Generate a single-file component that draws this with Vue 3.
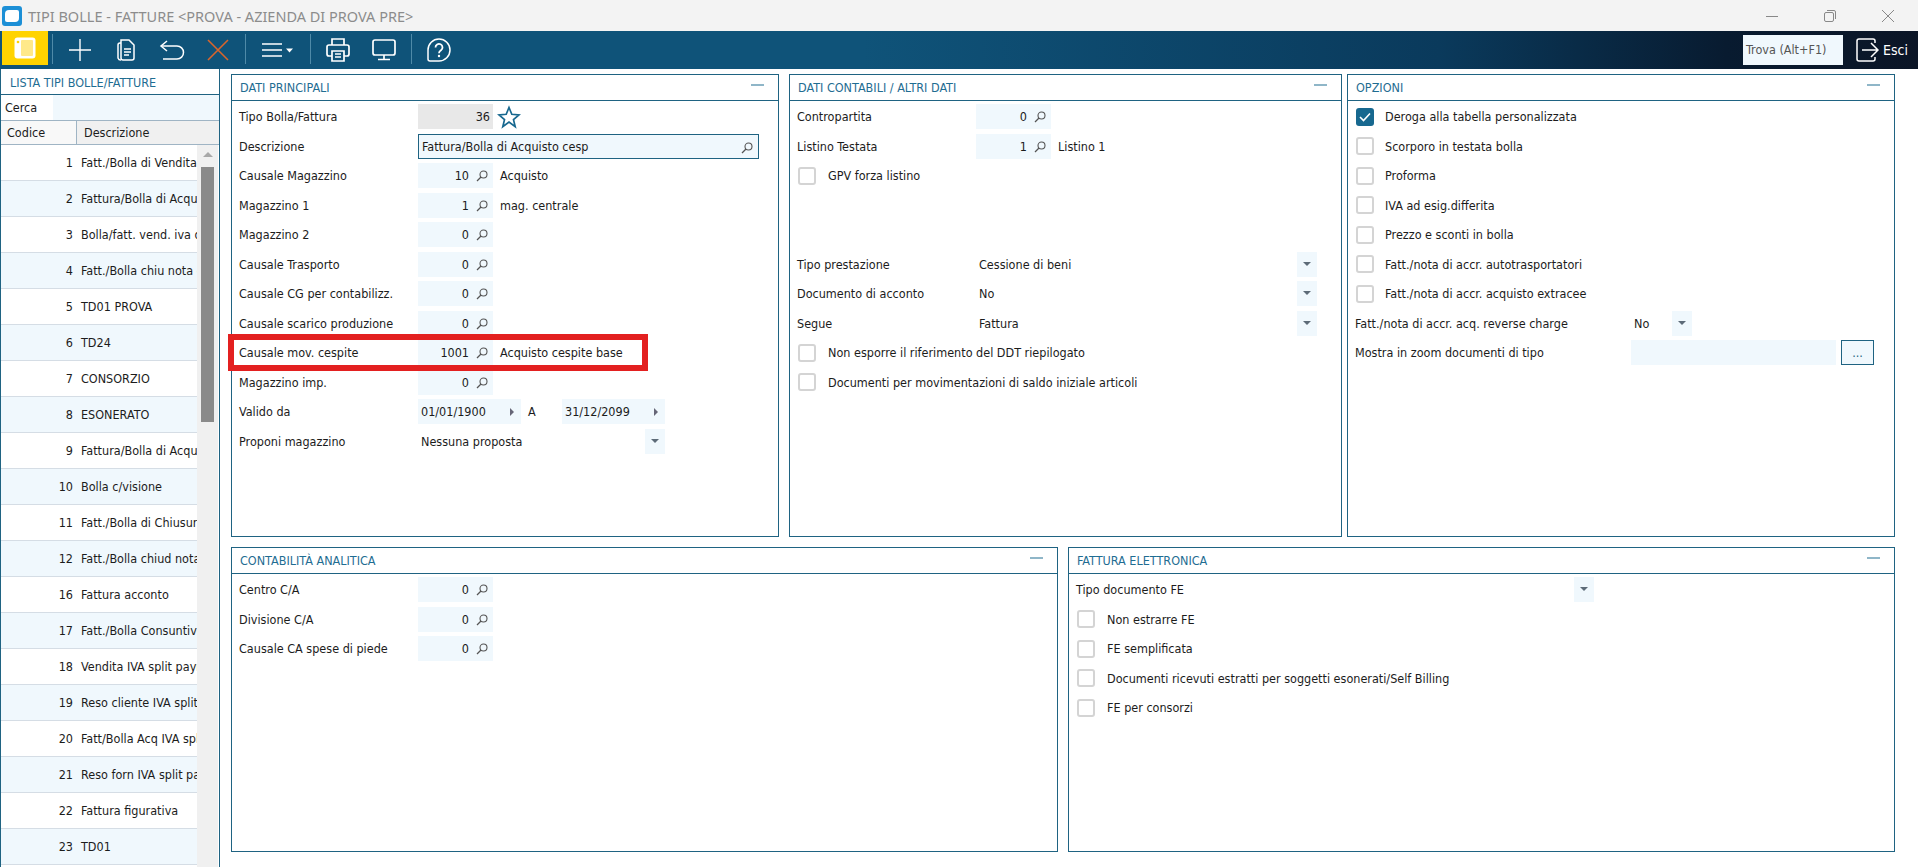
<script setup>
const listRows = [
  [1,'Fatt./Bolla di Vendita'],[2,'Fattura/Bolla di Acquisto'],[3,'Bolla/fatt. vend. iva differita'],[4,'Fatt./Bolla chiu nota credito'],
  [5,'TD01 PROVA'],[6,'TD24'],[7,'CONSORZIO'],[8,'ESONERATO'],[9,'Fattura/Bolla di Acquisto cesp'],[10,'Bolla c/visione'],
  [11,'Fatt./Bolla di Chiusura'],[12,'Fatt./Bolla chiud nota'],[16,'Fattura acconto'],[17,'Fatt./Bolla Consuntivo'],
  [18,'Vendita IVA split payment'],[19,'Reso cliente IVA split'],[20,'Fatt/Bolla Acq IVA split'],[21,'Reso forn IVA split pay'],
  [22,'Fattura figurativa'],[23,'TD01']
]
const mainRows = [
  ['Causale Magazzino','10','Acquisto'],['Magazzino 1','1','mag. centrale'],['Magazzino 2','0',''],['Causale Trasporto','0',''],
  ['Causale CG per contabilizz.','0',''],['Causale scarico produzione','0',''],['Causale mov. cespite','1001','Acquisto cespite base'],['Magazzino imp.','0','']
]
const selects = [['Tipo prestazione','Cessione di beni'],['Documento di acconto','No'],['Segue','Fattura']]
const options = [
  ['Deroga alla tabella personalizzata',true],['Scorporo in testata bolla',false],['Proforma',false],['IVA ad esig.differita',false],
  ['Prezzo e sconti in bolla',false],['Fatt./nota di accr. autotrasportatori',false],['Fatt./nota di accr. acquisto extracee',false]
]
const analytic = [['Centro C/A','0'],['Divisione C/A','0'],['Causale CA spese di piede','0']]
const feChecks = ['Non estrarre FE','FE semplificata','Documenti ricevuti estratti per soggetti esonerati/Self Billing','FE per consorzi']
</script>

<template>
  <div class="page">
    <header class="titlebar">
      <svg class="logo" width="22" height="22" viewBox="0 0 22 22"><rect x="1" y="1" width="20" height="20" rx="3" fill="#1c8fd6"/><path d="M8 5h8a2 2 0 0 1 2 2v6a4 4 0 0 1-4 4H6a2 2 0 0 1-2-2V9a4 4 0 0 1 4-4z" fill="#fff"/></svg>
      <span class="wintitle">TIPI BOLLE - FATTURE &lt;PROVA - AZIENDA DI PROVA PRE&gt;</span>
      <div class="winctl">
        <svg width="14" height="14" viewBox="0 0 14 14"><path d="M1 7.5h12" stroke="#888" fill="none"/></svg>
        <svg width="14" height="14" viewBox="0 0 14 14"><rect x="1.5" y="3.5" width="9" height="9" rx="1.5" stroke="#888" fill="none"/><path d="M4 1.5h7a1.5 1.5 0 0 1 1.5 1.5v7" stroke="#888" fill="none"/></svg>
        <svg width="14" height="14" viewBox="0 0 14 14"><path d="M1 1l12 12M13 1L1 13" stroke="#888" fill="none"/></svg>
      </div>
    </header>

    <nav class="toolbar">
      <button class="tb-main">
        <svg width="22" height="22" viewBox="0 0 22 22"><rect x="0.500" y="0.500" width="21" height="21" rx="3" fill="#fff"/><rect x="7" y="3" width="12" height="16" rx="1" fill="#ffe98a"/><circle cx="4" cy="5" r="1.300" fill="#ffd300"/></svg>
      </button>
      <i class="tsep"></i>
      <button class="tb">
        <svg width="24" height="24" viewBox="0 0 24 24"><path d="M12 1v22M1 12h22" stroke="#fff" stroke-width="1.400" fill="none"/></svg>
      </button>
      <button class="tb">
        <svg width="24" height="24" viewBox="0 0 24 24" fill="none" stroke="#fff" stroke-width="1.500"><path d="M7 2h8l5 5v13a2 2 0 0 1-2 2H9a2 2 0 0 1-2-2z"/><path d="M7 5H6a2 2 0 0 0-2 2v13a3 3 0 0 0 3 2"/><path d="M10 11h7M10 14h7M10 17h5"/></svg>
      </button>
      <button class="tb">
        <svg width="26" height="24" viewBox="0 0 26 24" fill="none" stroke="#fff" stroke-width="1.500"><path d="M8 3L2 8l6 5"/><path d="M2 8h16a6 6 0 0 1 0 13H4"/></svg>
      </button>
      <button class="tb">
        <svg width="24" height="24" viewBox="0 0 24 24"><path d="M2 2l20 20M22 2L2 22" stroke="#d9652c" stroke-width="1.600" fill="none"/></svg>
      </button>
      <i class="tsep"></i>
      <button class="tb tb-menu">
        <svg width="32" height="20" viewBox="0 0 32 20"><path d="M0 4h20M0 10h20M0 16h20" stroke="#fff" stroke-width="1.500" fill="none"/><path d="M24 8.500h7l-3.500 4z" fill="#fff"/></svg>
      </button>
      <i class="tsep"></i>
      <button class="tb">
        <svg width="26" height="26" viewBox="0 0 26 26" fill="none" stroke="#fff" stroke-width="1.700"><path d="M7 8V2h12v6"/><path d="M7 19H4a2 2 0 0 1-2-2v-7a2 2 0 0 1 2-2h18a2 2 0 0 1 2 2v7a2 2 0 0 1-2 2h-3"/><path d="M7 14h12v10H7z"/><path d="M10 17h6M10 20h6"/></svg>
      </button>
      <button class="tb">
        <svg width="26" height="24" viewBox="0 0 26 24" fill="none" stroke="#fff" stroke-width="1.700"><rect x="2" y="2" width="22" height="15" rx="2"/><path d="M13 17v4M7 21.500h12"/></svg>
      </button>
      <i class="tsep"></i>
      <button class="tb">
        <svg width="26" height="26" viewBox="0 0 26 26"><path d="M13 2a11 11 0 0 1 0 22H4a2 2 0 0 1-2-2V13A11 11 0 0 1 13 2z" fill="none" stroke="#fff" stroke-width="1.500"/><path d="M9.500 10.500a3.500 3.500 0 1 1 5.500 2.800c-1.300.9-2 1.500-2 3" fill="none" stroke="#fff" stroke-width="1.800"/><circle cx="13" cy="19" r="1.200" fill="#fff"/></svg>
      </button>
      <div class="tb-right">
        <span class="trova">Trova (Alt+F1)</span>
        <svg class="esci-icon" width="24" height="26" viewBox="0 0 24 26" fill="none" stroke="#fff" stroke-width="1.500"><path d="M20 6V4a2 2 0 0 0-2-2H4a2 2 0 0 0-2 2v18a2 2 0 0 0 2 2h14a2 2 0 0 0 2-2v-2"/><path d="M7 13h16M16 6l7 7-7 7"/></svg>
        <span class="esci">Esci</span>
      </div>
    </nav>

    <div class="workspace">
      <aside class="listpanel">
        <div class="list-title">LISTA TIPI BOLLE/FATTURE</div>
        <div class="cerca"><span class="cerca-l">Cerca</span><span class="cerca-i"></span></div>
        <div class="list-head"><span class="lh-code">Codice</span><span class="lh-desc">Descrizione</span></div>
        <div class="list-body">
          <div class="rows">
            <div v-for="(r,i) in listRows" :key="r[0]" class="lrow" :class="{alt:i%2===1}">
              <span class="lcode">{{ r[0] }}</span><span class="ldesc">{{ r[1] }}</span>
            </div>
          </div>
          <div class="scroll">
            <i class="sc-up"></i>
            <i class="sc-thumb"></i>
          </div>
        </div>
      </aside>

      <main class="content">
        <div class="toprow">
          <section class="panel p-main">
            <div class="phead"><span>DATI PRINCIPALI</span><i class="pmin"></i></div>
            <div class="pbody">
              <div class="row">
                <label>Tipo Bolla/Fattura</label>
                <span class="fld ro">36</span>
                <svg class="star" width="24" height="24" viewBox="0 0 24 24"><path d="M12 2.500l2.800 6.800 7.200.6-5.500 4.700 1.700 7.100L12 17l-6.200 4.700 1.700-7.100L2 9.900l7.200-.6z" fill="none" stroke="#17688f" stroke-width="1.700"/></svg>
              </div>
              <div class="row">
                <label>Descrizione</label>
                <span class="descr">Fattura/Bolla di Acquisto cesp
                  <svg class="lens" width="12" height="12" viewBox="0 0 12 12"><circle cx="7.500" cy="4.500" r="3.500" fill="none" stroke="#555" stroke-width="1.100"/><path d="M5 7l-4 4" stroke="#555" stroke-width="1.300"/></svg>
                </span>
              </div>
              <div v-for="r in mainRows" :key="r[0]" class="row">
                <label>{{ r[0] }}</label>
                <span class="fld">{{ r[1] }}
                  <svg class="lens" width="12" height="12" viewBox="0 0 12 12"><circle cx="7.500" cy="4.500" r="3.500" fill="none" stroke="#555" stroke-width="1.100"/><path d="M5 7l-4 4" stroke="#555" stroke-width="1.300"/></svg>
                </span>
                <span class="after">{{ r[2] }}</span>
              </div>
              <div class="row">
                <label>Valido da</label>
                <span class="date">01/01/1900<i class="arr-r"></i></span>
                <span class="a-lbl">A</span>
                <span class="date">31/12/2099<i class="arr-r"></i></span>
              </div>
              <div class="row">
                <label>Proponi magazzino</label>
                <span class="selval s-prop">Nessuna proposta</span>
                <span class="dd"><i class="arr-d"></i></span>
              </div>
            </div>
            <div class="redbox"></div>
          </section>

          <section class="panel p-acc">
            <div class="phead"><span>DATI CONTABILI / ALTRI DATI</span><i class="pmin"></i></div>
            <div class="pbody">
              <div class="row">
                <label>Contropartita</label>
                <span class="fld">0
                  <svg class="lens" width="12" height="12" viewBox="0 0 12 12"><circle cx="7.500" cy="4.500" r="3.500" fill="none" stroke="#555" stroke-width="1.100"/><path d="M5 7l-4 4" stroke="#555" stroke-width="1.300"/></svg>
                </span>
              </div>
              <div class="row">
                <label>Listino Testata</label>
                <span class="fld">1
                  <svg class="lens" width="12" height="12" viewBox="0 0 12 12"><circle cx="7.500" cy="4.500" r="3.500" fill="none" stroke="#555" stroke-width="1.100"/><path d="M5 7l-4 4" stroke="#555" stroke-width="1.300"/></svg>
                </span>
                <span class="after">Listino 1</span>
              </div>
              <div class="row chk"><i class="cb"></i><span>GPV forza listino</span></div>
              <div class="spacer"></div>
              <div v-for="s in selects" :key="s[0]" class="row">
                <label>{{ s[0] }}</label>
                <span class="selval s-acc">{{ s[1] }}</span>
                <span class="dd"><i class="arr-d"></i></span>
              </div>
              <div class="row chk"><i class="cb"></i><span>Non esporre il riferimento del DDT riepilogato</span></div>
              <div class="row chk"><i class="cb"></i><span>Documenti per movimentazioni di saldo iniziale articoli</span></div>
            </div>
          </section>

          <section class="panel p-opt">
            <div class="phead"><span>OPZIONI</span><i class="pmin"></i></div>
            <div class="pbody">
              <div v-for="o in options" :key="o[0]" class="row chk">
                <i class="cb" :class="{on:o[1]}">
                  <svg v-if="o[1]" width="18" height="18" viewBox="0 0 18 18"><path d="M4 9l3.500 3.500L14 5.500" fill="none" stroke="#fff" stroke-width="1.600"/></svg>
                </i>
                <span>{{ o[0] }}</span>
              </div>
              <div class="row c3">
                <label>Fatt./nota di accr. acq. reverse charge</label>
                <span class="selval s-rev">No</span>
                <span class="dd"><i class="arr-d"></i></span>
              </div>
              <div class="row c3">
                <label>Mostra in zoom documenti di tipo</label>
                <span class="zoomf"></span>
                <span class="dots">...</span>
              </div>
            </div>
          </section>
        </div>

        <div class="botrow">
          <section class="panel p-ana">
            <div class="phead"><span>CONTABILITÀ ANALITICA</span><i class="pmin"></i></div>
            <div class="pbody">
              <div v-for="r in analytic" :key="r[0]" class="row">
                <label>{{ r[0] }}</label>
                <span class="fld">{{ r[1] }}
                  <svg class="lens" width="12" height="12" viewBox="0 0 12 12"><circle cx="7.500" cy="4.500" r="3.500" fill="none" stroke="#555" stroke-width="1.100"/><path d="M5 7l-4 4" stroke="#555" stroke-width="1.300"/></svg>
                </span>
              </div>
            </div>
          </section>
          <section class="panel p-fe">
            <div class="phead"><span>FATTURA ELETTRONICA</span><i class="pmin"></i></div>
            <div class="pbody">
              <div class="row fe-top">
                <label>Tipo documento FE</label>
                <span class="dd"><i class="arr-d"></i></span>
              </div>
              <div v-for="c in feChecks" :key="c" class="row chk"><i class="cb"></i><span>{{ c }}</span></div>
            </div>
          </section>
        </div>
      </main>
    </div>
  </div>
</template>

<style>
html, body { margin: 0; background: #fff; overflow: hidden; }
</style>

<style scoped>
.page {
  width: 1918px; height: 867px; overflow: hidden; display: flex; flex-direction: column;
  font-family: "DejaVu Sans", sans-serif; font-stretch: condensed; font-size: 12.500px; color: #1c1c1c; background: #fff;
}
.titlebar { height: 31px; background: #f3f3f3; display: flex; align-items: center; flex: none; }
.logo { margin-left: 1px; }
.wintitle { margin-left: 5px; font-family: "Noto Sans", sans-serif; font-stretch: normal; font-size: 14.500px; color: #8c8c8c; white-space: nowrap; }
.winctl { margin-left: auto; margin-right: 23px; display: flex; gap: 44px; }
.toolbar { height: 38px; flex: none; display: flex; align-items: flex-start; background: linear-gradient(90deg, #0f5379 0%, #0f5379 45%, #0a3a5c 75%, #081b30 90%, #0b1526 100%); }
button { border: 0; padding: 0; background: none; display: flex; align-items: center; justify-content: center; }
.tb-main { width: 46px; height: 34px; margin-left: 2px; background: #ffd300; }
.tb { width: 46px; height: 38px; }
.tb-menu { width: 56px; }
.tsep { width: 1px; height: 30px; margin: 3px 4px 0; background: #4f8aa8; flex: none; }
.tb-right { margin-left: auto; display: flex; align-items: center; height: 38px; }
.trova { width: 97px; height: 30px; padding-left: 3px; background: #f0f8fd; color: #555; line-height: 30px; }
.esci-icon { margin-left: 12px; }
.esci { margin-left: 4px; margin-right: 10px; color: #fff; font-size: 14px; }

.workspace { flex: 1; display: flex; min-height: 0; }
.listpanel { width: 218px; flex: none; border-left: 1px solid #1f6382; border-right: 1px solid #1f6382; display: flex; flex-direction: column; }
.list-title { height: 25px; line-height: 27px; padding-left: 9px; color: #1f6d92; border-bottom: 1px solid #1f6382; flex: none; }
.cerca { height: 25px; display: flex; border-bottom: 1px solid #9fb4c4; flex: none; line-height: 25px; }
.cerca-l { width: 48px; padding-left: 4px; }
.cerca-i { flex: 1; background: #f0f8fd; }
.list-head { height: 23px; display: flex; line-height: 23px; border-bottom: 1px solid #9fb4c4; flex: none; }
.lh-code { width: 69px; padding-left: 6px; background: #f8f8f8; border-right: 1px solid #9fb4c4; }
.lh-desc { flex: 1; padding-left: 7px; background: #f0f0f0; }
.list-body { flex: 1; display: flex; min-height: 0; }
.rows { width: 196px; flex: none; overflow: hidden; }
.lrow { height: 35px; border-bottom: 1px solid #d5dde5; display: flex; line-height: 35px; white-space: nowrap; }
.lrow.alt { background: #f0f8fd; }
.lcode { width: 72px; text-align: right; flex: none; }
.ldesc { margin-left: 8px; }
.scroll { width: 21px; background: #f0f0f0; position: relative; }
.sc-up { position: absolute; left: 6px; top: 7px; border: 5px solid transparent; border-top: 0; border-bottom: 5px solid #a8a8a8; }
.sc-thumb { position: absolute; left: 4px; top: 22px; width: 13px; height: 255px; background: #8a8a8a; }

.content { padding: 5px 0 0 11px; }
.toprow, .botrow { display: flex; }
.toprow { height: 463px; }
.botrow { height: 305px; margin-top: 10px; }
.panel { border: 1px solid #1f6382; box-sizing: border-box; position: relative; display: flex; flex-direction: column; }
.p-main { width: 548px; }
.p-acc { width: 553px; margin-left: 10px; }
.p-opt { width: 548px; margin-left: 5px; }
.p-opt .cb { margin-right: 11px; }
.p-ana { width: 827px; }
.p-fe { width: 827px; margin-left: 10px; }
.phead { height: 25px; line-height: 26px; padding-left: 8px; color: #1f6d92; border-bottom: 1px solid #1f6382; flex: none; position: relative; }
.pmin { position: absolute; right: 14px; top: 9px; width: 13px; height: 2px; background: #8fb6c8; }
.pbody { padding: 3px 0 0 7px; }
.row { height: 25px; margin-bottom: 4.500px; display: flex; align-items: center; white-space: nowrap; }
label { width: 179px; flex: none; }
.fld { width: 75px; height: 25px; box-sizing: border-box; background: #f0f8fd; text-align: right; padding-right: 24px; line-height: 25px; position: relative; flex: none; }
.fld.ro { background: #e8e8e8; padding-right: 3px; }
.lens { position: absolute; right: 5px; top: 7px; }
.star { margin-left: 4px; }
.descr { width: 341px; height: 25px; box-sizing: border-box; border: 1px solid #1f6382; background: #f0f8fd; line-height: 23px; padding-left: 3px; position: relative; flex: none; }
.after { margin-left: 7px; }
.date { width: 103px; height: 25px; background: #f0f8fd; line-height: 25px; padding-left: 3px; box-sizing: border-box; position: relative; flex: none; }
.arr-r { position: absolute; right: 7px; top: 9px; border: 4px solid transparent; border-right: 0; border-left: 4px solid #667; }
.a-lbl { width: 41px; padding-left: 7px; box-sizing: border-box; flex: none; }
.selval { padding-left: 3px; box-sizing: border-box; flex: none; }
.s-prop { width: 227px; }
.s-acc { width: 321px; }
.s-rev { width: 41px; }
.dd { width: 20px; height: 25px; background: #f0f8fd; position: relative; flex: none; }
.arr-d { position: absolute; left: 6px; top: 10px; border: 4px solid transparent; border-bottom: 0; border-top: 4px solid #5d6b78; }
.spacer { height: 59px; }
.chk { padding-left: 1px; }
.cb { width: 18px; height: 18px; box-sizing: border-box; border: 2px solid #d4d4d4; border-radius: 3px; flex: none; background: #fff; margin-right: 12px; display: block; }
.cb.on { background: #17688f; border: 0; }
.cb svg { display: block; }
.c3 label { width: 276px; }
.zoomf { width: 205px; height: 25px; background: #f0f8fd; flex: none; }
.dots { width: 33px; height: 25px; box-sizing: border-box; margin-left: 5px; border: 1px solid #1f6382; background: #f0f8fd; text-align: center; line-height: 23px; color: #1f6382; flex: none; }
.fe-top label { width: 498px; }
.redbox { position: absolute; left: -4px; top: 259px; width: 420px; height: 37px; box-sizing: border-box; border: 6px solid #e32020; }
</style>
